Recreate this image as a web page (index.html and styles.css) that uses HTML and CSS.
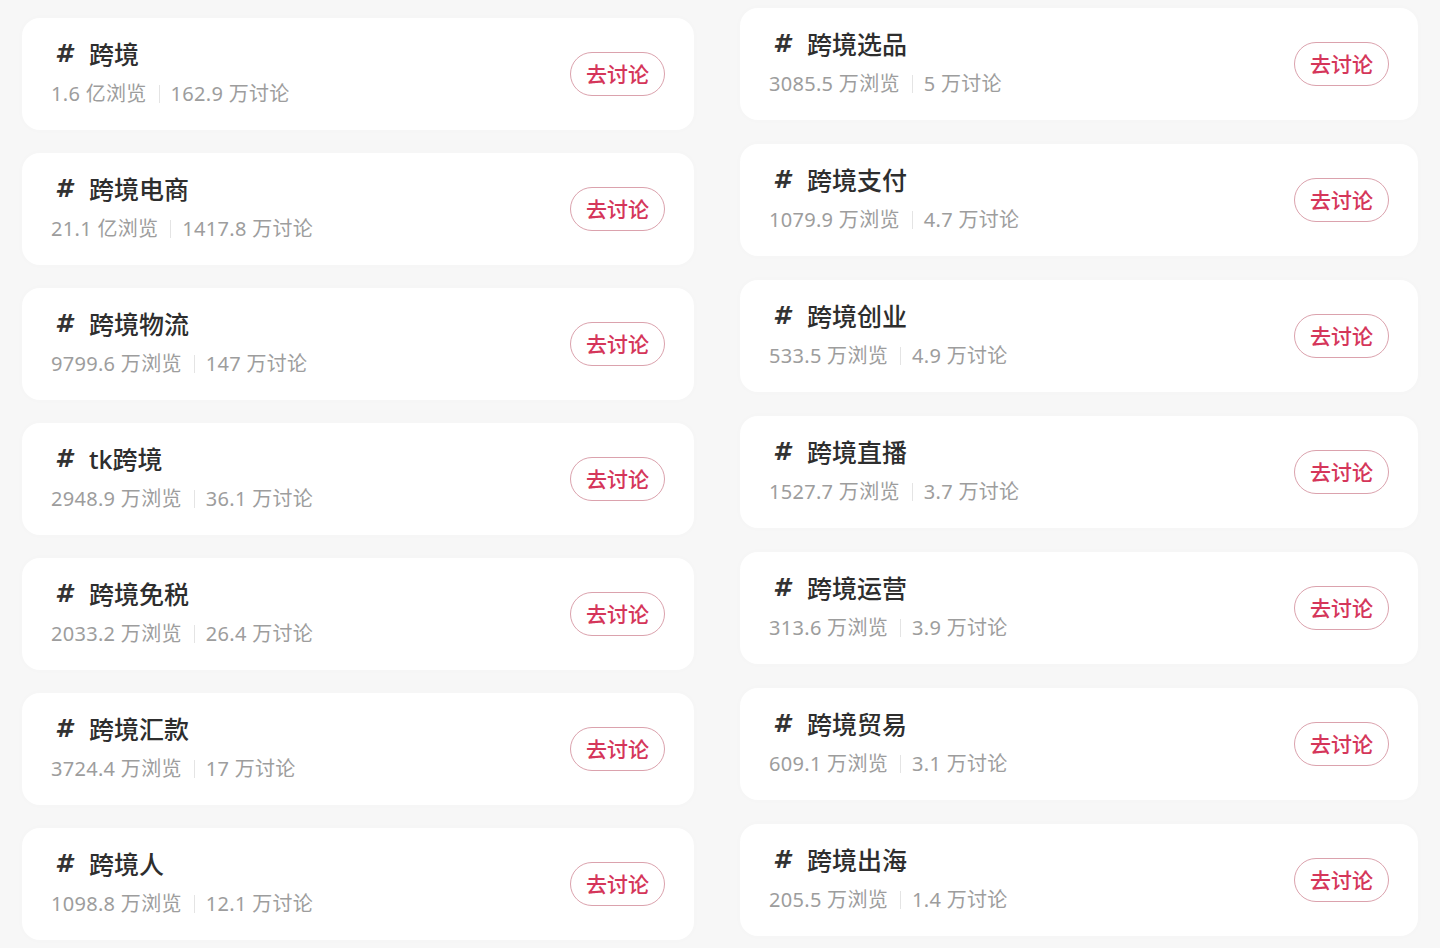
FILE: index.html
```html
<!DOCTYPE html>
<html lang="zh-CN">
<head>
<meta charset="utf-8">
<title>跨境话题</title>
<link rel="stylesheet" href="styles.css">
</head>
<body>
<div class="page">
  <div class="col col-left">
    <div class="card"><div class="info"><div class="title"><span class="hash">#</span>跨境</div><div class="stats"><span>1.6 亿浏览</span><span class="sep"></span><span>162.9 万讨论</span></div></div><button class="btn">去讨论</button></div>
    <div class="card"><div class="info"><div class="title"><span class="hash">#</span>跨境电商</div><div class="stats"><span>21.1 亿浏览</span><span class="sep"></span><span>1417.8 万讨论</span></div></div><button class="btn">去讨论</button></div>
    <div class="card"><div class="info"><div class="title"><span class="hash">#</span>跨境物流</div><div class="stats"><span>9799.6 万浏览</span><span class="sep"></span><span>147 万讨论</span></div></div><button class="btn">去讨论</button></div>
    <div class="card"><div class="info"><div class="title"><span class="hash">#</span>tk跨境</div><div class="stats"><span>2948.9 万浏览</span><span class="sep"></span><span>36.1 万讨论</span></div></div><button class="btn">去讨论</button></div>
    <div class="card"><div class="info"><div class="title"><span class="hash">#</span>跨境免税</div><div class="stats"><span>2033.2 万浏览</span><span class="sep"></span><span>26.4 万讨论</span></div></div><button class="btn">去讨论</button></div>
    <div class="card"><div class="info"><div class="title"><span class="hash">#</span>跨境汇款</div><div class="stats"><span>3724.4 万浏览</span><span class="sep"></span><span>17 万讨论</span></div></div><button class="btn">去讨论</button></div>
    <div class="card"><div class="info"><div class="title"><span class="hash">#</span>跨境人</div><div class="stats"><span>1098.8 万浏览</span><span class="sep"></span><span>12.1 万讨论</span></div></div><button class="btn">去讨论</button></div>
  </div>
  <div class="col col-right">
    <div class="card"><div class="info"><div class="title"><span class="hash">#</span>跨境选品</div><div class="stats"><span>3085.5 万浏览</span><span class="sep"></span><span>5 万讨论</span></div></div><button class="btn">去讨论</button></div>
    <div class="card"><div class="info"><div class="title"><span class="hash">#</span>跨境支付</div><div class="stats"><span>1079.9 万浏览</span><span class="sep"></span><span>4.7 万讨论</span></div></div><button class="btn">去讨论</button></div>
    <div class="card"><div class="info"><div class="title"><span class="hash">#</span>跨境创业</div><div class="stats"><span>533.5 万浏览</span><span class="sep"></span><span>4.9 万讨论</span></div></div><button class="btn">去讨论</button></div>
    <div class="card"><div class="info"><div class="title"><span class="hash">#</span>跨境直播</div><div class="stats"><span>1527.7 万浏览</span><span class="sep"></span><span>3.7 万讨论</span></div></div><button class="btn">去讨论</button></div>
    <div class="card"><div class="info"><div class="title"><span class="hash">#</span>跨境运营</div><div class="stats"><span>313.6 万浏览</span><span class="sep"></span><span>3.9 万讨论</span></div></div><button class="btn">去讨论</button></div>
    <div class="card"><div class="info"><div class="title"><span class="hash">#</span>跨境贸易</div><div class="stats"><span>609.1 万浏览</span><span class="sep"></span><span>3.1 万讨论</span></div></div><button class="btn">去讨论</button></div>
    <div class="card"><div class="info"><div class="title"><span class="hash">#</span>跨境出海</div><div class="stats"><span>205.5 万浏览</span><span class="sep"></span><span>1.4 万讨论</span></div></div><button class="btn">去讨论</button></div>
  </div>
</div>
</body>
</html>
```

FILE: styles.css
```css
* { box-sizing: border-box; }
html, body {
  margin: 0;
  padding: 0;
  background: #f7f7f7;
  font-family: "Noto Sans", "Noto Sans CJK SC", sans-serif;
}
.page {
  display: flex;
  gap: 46px;
  padding: 0 22px;
  height: 948px;
  overflow: hidden;
}
.col {
  display: flex;
  flex-direction: column;
}
.col-left {
  width: 672px;
  padding-top: 18px;
  gap: 23px;
}
.col-right {
  width: 678px;
  padding-top: 8px;
  gap: 24px;
}
.card {
  height: 112px;
  flex: none;
  background: #ffffff;
  border-radius: 18px;
  box-shadow: 0 0 10px rgba(0, 0, 0, 0.015);
  display: flex;
  align-items: center;
  justify-content: space-between;
  padding: 0 29px 0 29px;
}
.info {
  display: flex;
  flex-direction: column;
  margin-top: -1px;
}
.title {
  font-size: 25px;
  line-height: 28px;
  color: #2e2e2e;
  font-weight: 500;
  display: flex;
  align-items: center;
  padding-left: 4px;
}
.hash {
  font-style: italic;
  font-weight: 700;
  font-size: 25px;
  width: 34px;
  color: #333;
  font-family: "DejaVu Sans", sans-serif;
}
.stats {
  margin-top: 13px;
  font-size: 20px;
  line-height: 26px;
  color: #9d9d9d;
  display: flex;
  align-items: center;
  letter-spacing: 0.3px;
}
.sep {
  width: 1px;
  height: 18px;
  background: #e4e4e4;
  margin: 0 11px 0 12px;
}
.btn {
  width: 95px;
  height: 44px;
  border: 1.5px solid #dba2ad;
  border-radius: 22px;
  background: #fff;
  color: #d5365a;
  font-family: "Noto Sans CJK SC", sans-serif;
  font-size: 21px;
  font-weight: 500;
  padding: 0 0 2px 0;
  display: flex;
  align-items: center;
  justify-content: center;
}
```
